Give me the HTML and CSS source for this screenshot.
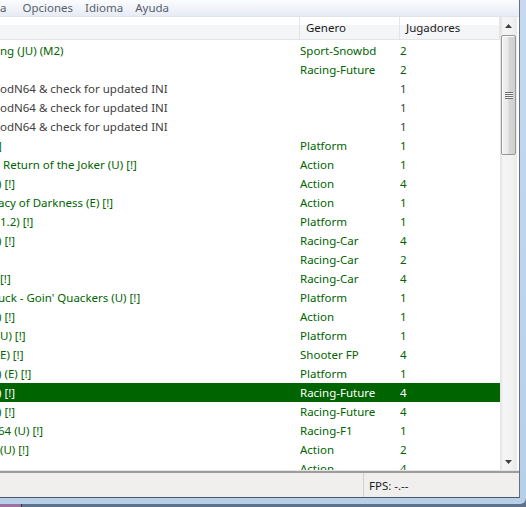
FILE: index.html
```html
<!DOCTYPE html>
<html lang="es">
<head>
  <meta charset="UTF-8">
  <meta name="viewport" content="width=device-width, initial-scale=1.0">
  <title>Project64</title>
  <link rel="stylesheet" href="styles.css">
</head>
<body>
  <div class="window">
    <div class="client">
      <div class="menu-bar">
        <span class="menu-item first">a</span>
        <span class="menu-item">Opciones</span>
        <span class="menu-item">Idioma</span>
        <span class="menu-item">Ayuda</span>
      </div>

      <div class="rom-list">
        <div class="list-body">
          <div class="list-header">
            <div class="col-head"></div>
            <div class="col-head">Genero</div>
            <div class="col-head">Jugadores</div>
          </div>
          <div class="rows">
            <div class="row"><span class="name">ng (JU) (M2)</span><span>Sport-Snowbd</span><span>2</span></div>
            <div class="row"><span class="name"></span><span>Racing-Future</span><span>2</span></div>
            <div class="row ini"><span class="name">odN64 &amp; check for updated INI</span><span></span><span>1</span></div>
            <div class="row ini"><span class="name">odN64 &amp; check for updated INI</span><span></span><span>1</span></div>
            <div class="row ini"><span class="name">odN64 &amp; check for updated INI</span><span></span><span>1</span></div>
            <div class="row"><span class="name cut">]</span><span>Platform</span><span>1</span></div>
            <div class="row"><span class="name">&nbsp;Return of the Joker (U) [!]</span><span>Action</span><span>1</span></div>
            <div class="row"><span class="name cut">) [!]</span><span>Action</span><span>4</span></div>
            <div class="row"><span class="name cut">acy of Darkness (E) [!]</span><span>Action</span><span>1</span></div>
            <div class="row"><span class="name">1.2) [!]</span><span>Platform</span><span>1</span></div>
            <div class="row"><span class="name cut">) [!]</span><span>Racing-Car</span><span>4</span></div>
            <div class="row"><span class="name"></span><span>Racing-Car</span><span>2</span></div>
            <div class="row"><span class="name">[!]</span><span>Racing-Car</span><span>4</span></div>
            <div class="row"><span class="name cut">uck - Goin' Quackers (U) [!]</span><span>Platform</span><span>1</span></div>
            <div class="row"><span class="name cut">) [!]</span><span>Action</span><span>1</span></div>
            <div class="row"><span class="name">U) [!]</span><span>Platform</span><span>1</span></div>
            <div class="row"><span class="name">E) [!]</span><span>Shooter FP</span><span>4</span></div>
            <div class="row"><span class="name cut">) (E) [!]</span><span>Platform</span><span>1</span></div>
            <div class="row selected"><span class="name cut">) [!]</span><span>Racing-Future</span><span>4</span></div>
            <div class="row"><span class="name cut">) [!]</span><span>Racing-Future</span><span>4</span></div>
            <div class="row"><span class="name cut">64 (U) [!]</span><span>Racing-F1</span><span>1</span></div>
            <div class="row"><span class="name">(U) [!]</span><span>Action</span><span>2</span></div>
            <div class="row"><span class="name"></span><span>Action</span><span>4</span></div>
          </div>
        </div>

        <div class="scrollbar">
          <div class="arrow">
            <svg width="7" height="4" viewBox="0 0 7 4"><polygon points="3.5,0 7,4 0,4" fill="#404040"/></svg>
          </div>
          <div class="thumb">
            <div class="grip"></div>
          </div>
          <div class="track"></div>
          <div class="arrow">
            <svg width="7" height="4" viewBox="0 0 7 4"><polygon points="0,0 7,0 3.5,4" fill="#404040"/></svg>
          </div>
        </div>
      </div>

      <div class="status-bar">
        <div class="status-cell first"></div>
        <div class="status-cell">FPS: -.--</div>
      </div>
    </div>
  </div>
  <div class="desktop"><span class="task-icon"></span></div>
</body>
</html>
```

FILE: styles.css
```css
* { margin: 0; padding: 0; box-sizing: border-box; }
html, body {
  width: 526px;
  height: 507px;
  overflow: hidden;
}
body {
  font-family: "Noto Sans", "Open Sans", sans-serif;
  font-size: 11.5px;
  background: #5f728c;
  display: flex;
  flex-direction: column;
}

/* aero frame round the client area */
.window {
  height: 504px;
  padding: 0 6px 6px 0;
  background: linear-gradient(#c6d9ef, #b8cfe8);
  border-bottom-right-radius: 6px;
}
.client {
  height: 498px;
  display: flex;
  flex-direction: column;
  background: #f0efee;
  border-right: 1px solid #66727f;
  border-bottom: 1px solid #4c5866;
}

.menu-bar {
  height: 16px;
  display: flex;
  background: linear-gradient(#fbfcfe, #e7ebf4);
  color: #585e6c;
  line-height: 16px;
}
.menu-item { padding: 0 6px; }
.menu-item.first { padding: 0 9px 0 0; }
.menu-item:nth-child(2) { padding-left: 7px; }

/* rom browser */
.rom-list {
  height: 457px;
  display: flex;
  background: #e4e4e4;
  border-top: 1px solid #dfe3ea;
  border-bottom: 2px solid #9d9d9d;
  padding-bottom: 1px;
}
.list-body {
  width: 500px;
  display: flex;
  flex-direction: column;
  background: #fff;
  overflow: hidden;
}
.list-header {
  height: 23px;
  display: grid;
  grid-template-columns: 300px 100px 100px;
  background: linear-gradient(#fff 0, #fff 8px, #f4f5f7 8px);
  border-bottom: 1px solid #e3e4e6;
  color: #1b1b1b;
}
.col-head {
  padding-left: 6px;
  line-height: 22px;
  border-right: 1px solid #e3e5e8;
}
.rows {
  flex: 1;
  padding-top: 1px;
  overflow: hidden;
}
.row {
  display: grid;
  grid-template-columns: 300px 100px 1fr;
  height: 19px;
  line-height: 19px;
  color: #006400;
  white-space: nowrap;
}
.row .name { overflow: hidden; }
/* list is scrolled sideways, first glyph sits half out of view */
.row .name.cut { text-indent: -2px; }
.row.ini { color: #404040; }
.row.selected {
  background: #006400;
  color: #fff;
}

.scrollbar {
  width: 19px;
  display: flex;
  flex-direction: column;
  align-items: center;
  border-right: 2px solid #fff;
  background: linear-gradient(to right, #e2e2e2 0, #ececec 2px, #f5f5f5 3px, #f2f2f2 11px, #e9e9e9 17px);
}
.arrow {
  height: 17px;
  width: 100%;
  display: flex;
  align-items: center;
  justify-content: center;
}
.thumb {
  width: 15px;
  height: 120px;
  margin-top: 1px;
  border: 1px solid #979797;
  border-radius: 2px;
  background: linear-gradient(to right, #f4f4f4, #e8e8e8 45%, #d6d6d6 55%, #cfcfcf);
  box-shadow: inset 1px 1px 0 #fbfbfb;
  display: flex;
  align-items: center;
  justify-content: center;
}
.grip {
  width: 8px;
  height: 7px;
  background: repeating-linear-gradient(#6f6f6f 0, #6f6f6f 1px, #f4f4f4 1px, #f4f4f4 2px);
}
.track { flex: 1; }

.status-bar {
  flex: 1;
  display: flex;
  color: #1e1e1e;
}
.status-cell {
  padding: 2px 0 0 5px;
  line-height: 22px;
}
.status-cell.first {
  width: 364px;
  border-right: 1px solid #d3d1ce;
}

.desktop {
  flex: 1;
  display: flex;
}
.task-icon {
  width: 22px;
  background: #9d719e;
  border-right: 1px solid #3a3a44;
}
```
